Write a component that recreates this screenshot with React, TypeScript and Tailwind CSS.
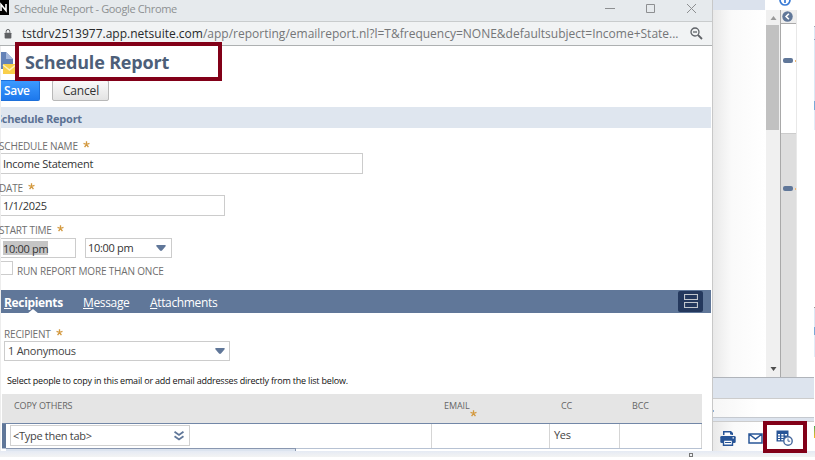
import type { ReactNode } from "react";

const label = "text-[10px] leading-[14px] text-[#6f6f6f] tracking-[-0.17px] whitespace-nowrap";

function Star({ className = "" }: { className?: string }) {
  return (
    <svg viewBox="0 0 8 8" className={`w-[7px] h-[7px] shrink-0 ${className}`} stroke="#d3993f" strokeWidth="1.5">
      <path d="M4 0.3V4M4 4L0.6 2.8M4 4L7.4 2.8M4 4L1.8 7M4 4L6.2 7" fill="none" />
    </svg>
  );
}

function FieldLabel({ children, className = "" }: { children: ReactNode; className?: string }) {
  return (
    <div className={`flex items-center h-[14px] gap-[5px] ${label} ${className}`}>
      {children}
      <Star className="mb-[4px]" />
    </div>
  );
}

function Caret() {
  return (
    <svg viewBox="0 0 10 6" className="w-[10px] h-[6px]">
      <path d="M0.5 0H9.5Q10 1 9 2L6 5.5Q5 6.3 4 5.5L1 2Q0 1 0.5 0Z" fill="#607799" />
    </svg>
  );
}

function Titlebar() {
  return (
    <div className="flex h-[22px] shrink-0 bg-[#e6eaed] border-b border-[#c9cccd]">
      <div className="w-[9px] h-[15px] bg-black overflow-hidden shrink-0">
        <svg viewBox="0 0 9 15" className="w-[9px] h-[15px]" fill="none" stroke="#fff" strokeWidth="1.6">
          <path d="M1 11V4.5L6 10.5V4" />
        </svg>
      </div>
      <span className="ml-[5px] w-[590px] text-[11px] leading-[17px] text-[#8d9092] tracking-[-0.35px] whitespace-nowrap">
        Schedule Report - Google Chrome
      </span>
      <svg viewBox="0 0 100 16" className="w-[100px] h-[16px]" fill="none" stroke="#8d8f91" strokeWidth="1">
        <path d="M1 8.500H11M42.500 4.500H50.500V12.500H42.500ZM83 4L92 13M92 4L83 13" />
      </svg>
    </div>
  );
}

function Addressbar() {
  return (
    <div className="flex items-center h-[24px] shrink-0 bg-[#f1f3f4] border-b border-[#adb0b1]">
      <svg viewBox="0 0 8 11" className="ml-[4px] w-[8px] h-[10px]">
        <rect x="0.300" y="4" width="7.400" height="6.500" rx="0.800" fill="#5f6164" />
        <path d="M2 4V2.500a2 2 0 0 1 4 0V4" fill="none" stroke="#5f6164" strokeWidth="1.100" />
      </svg>
      <span className="ml-[10px] w-[668px] text-[12px] leading-[22px] text-[#747678] whitespace-nowrap">
        <span className="text-[#27292b]">tstdrv2513977.app.netsuite.com</span>
        /app/reporting/emailreport.nl?l=T&amp;frequency=NONE&amp;defaultsubject=Income+State...
      </span>
      <svg viewBox="0 0 13 13" className="w-[13px] h-[13px] shrink-0" fill="none" stroke="#5f6368" strokeWidth="1.300">
        <circle cx="5" cy="5" r="4" />
        <path d="M3 5H7" />
        <path d="M8 8L12 12" strokeWidth="1.800" />
      </svg>
    </div>
  );
}

function ReportForm() {
  return (
    <div className="h-[244px] shrink-0">
      <div className="h-[34px] flex items-start relative">
        <svg viewBox="0 0 14 24" className="w-[14px] h-[24px] mt-[5px] shrink-0">
          <path d="M0 1H5L12 8V18H0Z" fill="#6482b7" />
          <path d="M5 1L12 8H5Z" fill="#a5b8dc" />
          <rect x="2" y="13" width="12" height="10" fill="#f9cf4a" />
          <path d="M2 14L8.500 19L14 14.500" fill="none" stroke="#fff1ba" strokeWidth="1.500" />
        </svg>
        <div className="absolute z-10 left-[14px] top-[-4px] w-[207px] h-[39px] border-4 border-[#820018] bg-white">
          <h1 className="ml-[6px] text-[18px] leading-[33px] font-bold text-[#4d5f79] tracking-[-0.17px] whitespace-nowrap">Schedule Report</h1>
        </div>
      </div>
      <div className="flex gap-[12px] h-[21px]">
        <button className="w-[39px] text-left pl-[3px] text-[12px] leading-[19px] font-semibold tracking-[-0.3px] text-white bg-linear-to-b from-[#3c9aff] to-[#1d78ec] border border-l-0 border-[#1d70da] rounded-r-[2px]">Save</button>
        <button className="w-[57px] pl-[1px] text-[12px] leading-[19px] font-medium tracking-[-0.15px] text-[#333] bg-linear-to-b from-[#fafafa] to-[#e3e3e3] border border-[#b8b8b8] rounded-[2px]">Cancel</button>
      </div>
      <div className="mt-[6px] w-[710px] h-[21px] overflow-hidden bg-[#dfe6ef]">
        <h2 className="ml-[-5px] text-[11px] leading-[23px] font-bold tracking-[-0.25px] text-[#5b7194] whitespace-nowrap">Schedule Report</h2>
      </div>
      <FieldLabel className="mt-[11px] ml-[-2px]">SCHEDULE NAME</FieldLabel>
      <div className="w-[362px] h-[21px] border border-l-0 border-[#ccc] pl-[2px] text-[11px] leading-[20px] tracking-[-0.25px] text-[#333]">Income Statement</div>
      <FieldLabel className="mt-[7px] ml-[-2px]">DATE</FieldLabel>
      <div className="w-[224px] h-[21px] border border-l-0 border-[#ccc] pl-[2px] text-[11px] leading-[20px] tracking-[-0.25px] text-[#333]">1/1/2025</div>
      <FieldLabel className="mt-[7px] ml-[-2px]">START TIME</FieldLabel>
      <div className="flex gap-[9px] mt-[1px] text-[11px] leading-[18px] tracking-[-0.3px] text-[#333]">
        <div className="w-[75px] h-[20px] border border-l-0 border-[#ccc] pl-[2px]">
          <span className="block mt-[2px] w-[45px] h-[14px] leading-[15px] bg-[#c5c5c5] whitespace-nowrap">10:00 pm</span>
        </div>
        <div className="w-[87px] h-[20px] border border-[#ccc] pl-[2px] pr-[5px] flex items-center justify-between">
          <span>10:00 pm</span>
          <Caret />
        </div>
      </div>
      <div className="flex mt-[3px]">
        <div className="w-[12px] h-[14px] border border-l-0 border-[#ccc]" />
        <span className={`${label} ml-[4px] mt-[3px]`}>RUN REPORT MORE THAN ONCE</span>
      </div>
    </div>
  );
}

function Tab({ first, rest, active }: { first: string; rest: string; active?: boolean }) {
  return (
    <span className={active ? "font-bold" : ""}>
      <span className="underline">{first}</span>
      {rest}
    </span>
  );
}

function Tabs() {
  return (
    <div className="relative flex h-[23px] w-[710px] shrink-0 bg-[#607799] text-white text-[12px] leading-[25px] whitespace-nowrap">
      <div className="w-[79px] pl-[3px] tracking-[-0.35px]"><Tab first="R" rest="ecipients" active /></div>
      <div className="w-[67px] pl-[3px] tracking-[-0.35px]"><Tab first="M" rest="essage" /></div>
      <div className="w-[531px] pl-[3px] tracking-[-0.35px]"><Tab first="A" rest="ttachments" /></div>
      <div className="w-[25px] h-[21px] mt-[1px] rounded-[2px] bg-[#24385d] flex items-center justify-center">
        <svg viewBox="0 0 14 14" className="w-[14px] h-[14px] mb-[1px]" fill="none" stroke="#c1c6cd" strokeWidth="1.200">
          <path d="M0.500 0.500H13.500V5.500H0.500ZM0.500 8.500H13.500V13.500H0.500Z" />
        </svg>
      </div>
      <svg viewBox="0 0 12 5" className="absolute left-[26px] bottom-0 w-[12px] h-[4px]"><path d="M0 5L6 0L12 5Z" fill="#fff" /></svg>
    </div>
  );
}

function Recipients() {
  return (
    <div className="h-[138px] shrink-0 pl-[1px]">
      <div className="pl-[2px] pt-[14px]">
        <FieldLabel>RECIPIENT</FieldLabel>
        <div className="w-[226px] h-[20px] border border-[#ccc] pl-[3px] pr-[4px] flex items-center justify-between text-[11px] leading-[18px] tracking-[-0.25px] text-[#444]">
          <span>1 Anonymous</span>
          <Caret />
        </div>
        <p className="mt-[13px] ml-[3px] h-[14px] text-[9px] leading-[14px] tracking-[-0.2px] text-[#111] whitespace-nowrap">
          Select people to copy in this email or add email addresses directly from the list below.
        </p>
      </div>
      <div className="mt-[6px] flex w-[700px] h-[30px] bg-[#e5e5e5] border-b border-[#7287a7] text-[9px] leading-[24px] tracking-[-0.1px] text-[#666]">
        <span className="w-[429px] pl-[12px]">COPY OTHERS</span>
        <span className="w-[118px] pl-[13px] flex">EMAIL<Star className="mt-[16px]" /></span>
        <span className="w-[70px] pl-[12px]">CC</span>
        <span className="pl-[13px]">BCC</span>
      </div>
      <div className="flex w-[700px] h-[25px] border-b border-[#b7c2d3] text-[11px] leading-[21px] tracking-[-0.3px] text-[#444]">
        <div className="w-[429px] border-l-4 border-[#607799] flex">
          <div className="ml-[4px] mt-[1px] w-[180px] h-[21px] border border-[#d1d1d1] pl-[2px] pr-[5px] flex items-center justify-between">
            <span>&lt;Type then tab&gt;</span>
            <svg viewBox="0 0 10 10" className="w-[10px] h-[10px]" fill="none" stroke="#607799" strokeWidth="1.800"><path d="M0.500 0.700L5 4L9.500 0.700M0.500 5.200L5 8.500L9.500 5.200" /></svg>
          </div>
        </div>
        <div className="w-[118px] border-l border-[#d5d5d5]" />
        <div className="w-[70px] border-l border-[#d5d5d5] pl-[4px]">Yes</div>
        <div className="grow border-x border-[#d5d5d5]" />
      </div>
      <div className="mt-[-1px] ml-[4px] w-[290px] h-[3px] border-t border-r border-[#8997b0] bg-[#dce4ef]" />
    </div>
  );
}

function ChromeWindow() {
  return (
    <div className="w-[713px] h-[451px] shrink-0 flex flex-col border-r border-[#c8c8c8] bg-white overflow-hidden">
      <Titlebar />
      <Addressbar />
      <div className="border-l border-[#ededed]">
        <ReportForm />
        <Tabs />
        <Recipients />
      </div>
    </div>
  );
}

function SideRail() {
  return (
    <div className="w-[17px] border-x border-l-[#a9a9a9] border-r-[#e8e8e8] flex flex-col">
      <div className="h-[14px] shrink-0 bg-[#eee] border-b border-[#aaa] flex justify-center items-center">
        <svg viewBox="0 0 12 12" className="w-[11px] h-[11px] mr-[3px]"><circle cx="6" cy="6" r="5.700" fill="#607799" /><path d="M7.500 3L4.500 6L7.500 9" fill="none" stroke="#fff" strokeWidth="1.800" /></svg>
      </div>
      <div className="h-[109px] shrink-0 bg-white flex items-start pt-[34px] pl-[2px]"><span className="w-[10px] h-[5px] rounded-[2px] bg-[#607799]" /><span className="ml-[2px] mt-[2px] w-[1px] h-[2px] bg-[#efb570]" /></div>
      <div className="grow bg-[#dedede] border-t border-[#ccc] flex items-start pt-[52px] pl-[2px]"><span className="w-[10px] h-[5px] rounded-[2px] bg-[#607799]" /><span className="ml-[2px] mt-[2px] w-[1px] h-[2px] bg-[#efb570]" /></div>
    </div>
  );
}

function BackgroundPage() {
  return (
    <div className="w-[102px] h-[451px] flex flex-col bg-white">
      <div className="h-[10px] flex shrink-0 overflow-hidden">
        <div className="w-[52px] bg-[#dbe2ed]" />
        <svg viewBox="0 0 12 12" className="ml-[14px] mt-[-6px] w-[12px] h-[12px] shrink-0" fill="none" stroke="#397bd6" strokeWidth="1.700"><circle cx="6" cy="6" r="5" /><path d="M6 3V9" /></svg>
      </div>
      <div className="flex h-[367px] shrink-0">
        <div className="w-[53px] bg-linear-to-r from-[#e9e9e9] via-[#fafafa] via-35% to-white" />
        <div className="w-[14px] bg-[#f0f0f0] flex flex-col items-center">
          <svg viewBox="0 0 6 4" className="w-[7px] h-[4px] mt-[6px] shrink-0"><path d="M0 4L3 0L6 4Z" fill="#999" /></svg>
          <div className="mt-[5px] mr-[1px] w-[13px] h-[105px] bg-[#c1c1c1]" />
          <svg viewBox="0 0 6 4" className="w-[7px] h-[4px] mt-auto mb-[6px] shrink-0"><path d="M0 0L3 4L6 0Z" fill="#4d4d4d" /></svg>
        </div>
        <SideRail />
        <div className="ml-auto w-[1px] flex flex-col pt-[16px]">
          <div className="h-[14px] shrink-0 bg-[#dce9f6] border-y border-t-[#9aa8b8] border-b-[#91a4c3]" />
          <div className="h-[61px] shrink-0 bg-[#dce9f6]" />
          <div className="h-[9px] shrink-0 bg-[#79aad7]" />
          <div className="h-[20px] shrink-0 bg-[#e2ecf8]" />
          <div className="mt-[177px] h-[20px] shrink-0 bg-[#dce9f6] border-t border-[#999]" />
          <div className="h-[8px] shrink-0 bg-[#79aad7]" />
          <div className="h-[22px] shrink-0 bg-[#e2ecf8]" />
        </div>
      </div>
      <div className="h-[22px] shrink-0 w-[101px] bg-[#dde4ee] border-t border-b border-t-[#b0b4ba] border-b-[#ccc]" />
      <div className="h-[19px] shrink-0 w-[101px] bg-linear-to-r from-[#f6f6f6] to-white to-45% border-b border-[#c5c9cf] flex items-end">
        <span className="w-[1px] h-[2px] mb-[5px] bg-[#8cadd1]" />
      </div>
      <div className="h-[4px] shrink-0 w-[101px] bg-[#dde4ee] border-b border-[#ccc]" />
      <div className="h-[29px] flex bg-linear-to-r from-[#e9e9e9] via-[#fafafa] via-20% to-white to-50%">
        <svg viewBox="0 0 16 15" className="mt-[9px] ml-[7px] w-[16px] h-[15px] shrink-0">
          <path d="M3 0H11L13 2V4H3Z" fill="#285597" />
          <path d="M4.500 1.500H10V3.500H11.500V4.500H4.500Z" fill="#fff" />
          <rect x="0.300" y="5" width="15.400" height="7" rx="1.300" fill="#285597" />
          <rect x="12.500" y="6.300" width="1.500" height="1.200" fill="#fff" />
          <path d="M3.500 9H12.500V14.300H3.500Z" fill="#fff" stroke="#285597" strokeWidth="1.400" />
          <path d="M5 11.500H11" stroke="#285597" />
        </svg>
        <svg viewBox="0 0 15 11" className="mt-[11px] ml-[12px] w-[15px] h-[11px] shrink-0" fill="none" stroke="#285597" strokeWidth="1.500"><path d="M1 1H14V10H1ZM1 1L7.500 6L14 1" /></svg>
        <div className="relative z-10 mt-[-1px] w-[44px] h-[32px] shrink-0 bg-white border-4 border-[#820018]">
          <svg viewBox="0 0 17 16" className="ml-[9px] mt-[5px] w-[17px] h-[16px]">
            <path d="M0.500 0.500H12.500V11.500H0.500Z" fill="#285597" />
            <path d="M2 4H4V5.500H2ZM5.300 4H7.500V5.500H5.300ZM8.800 4H11V5.500H8.800ZM2 6.500H4V8H2ZM5.300 6.500H7.500V8H5.300ZM2 9H4V10.300H2ZM5.300 9H7.500V10.300H5.300Z" fill="#fff" />
            <circle cx="12" cy="11" r="4.200" fill="#fff" stroke="#47699d" strokeWidth="1.400" />
            <path d="M12 8.500V11.200H14.200" stroke="#47699d" fill="none" />
          </svg>
        </div>
        <div className="ml-auto w-[1px] h-[12px] mt-[4px] bg-linear-to-b from-[#34a853] to-[#fbbc05]" />
      </div>
    </div>
  );
}

export default function App() {
  return (
    <main className="w-[815px] h-[460px] overflow-hidden bg-white font-['Open_Sans','Noto_Sans',sans-serif]">
      <div className="flex">
        <ChromeWindow />
        <BackgroundPage />
      </div>
      <div className="h-[6px] bg-linear-to-b from-[#e5eaf4] to-[#f3f3f3] flex">
        <span className="ml-[689px] mt-[2px] w-[4px] h-[4px] border border-[#777]" />
      </div>
    </main>
  );
}
